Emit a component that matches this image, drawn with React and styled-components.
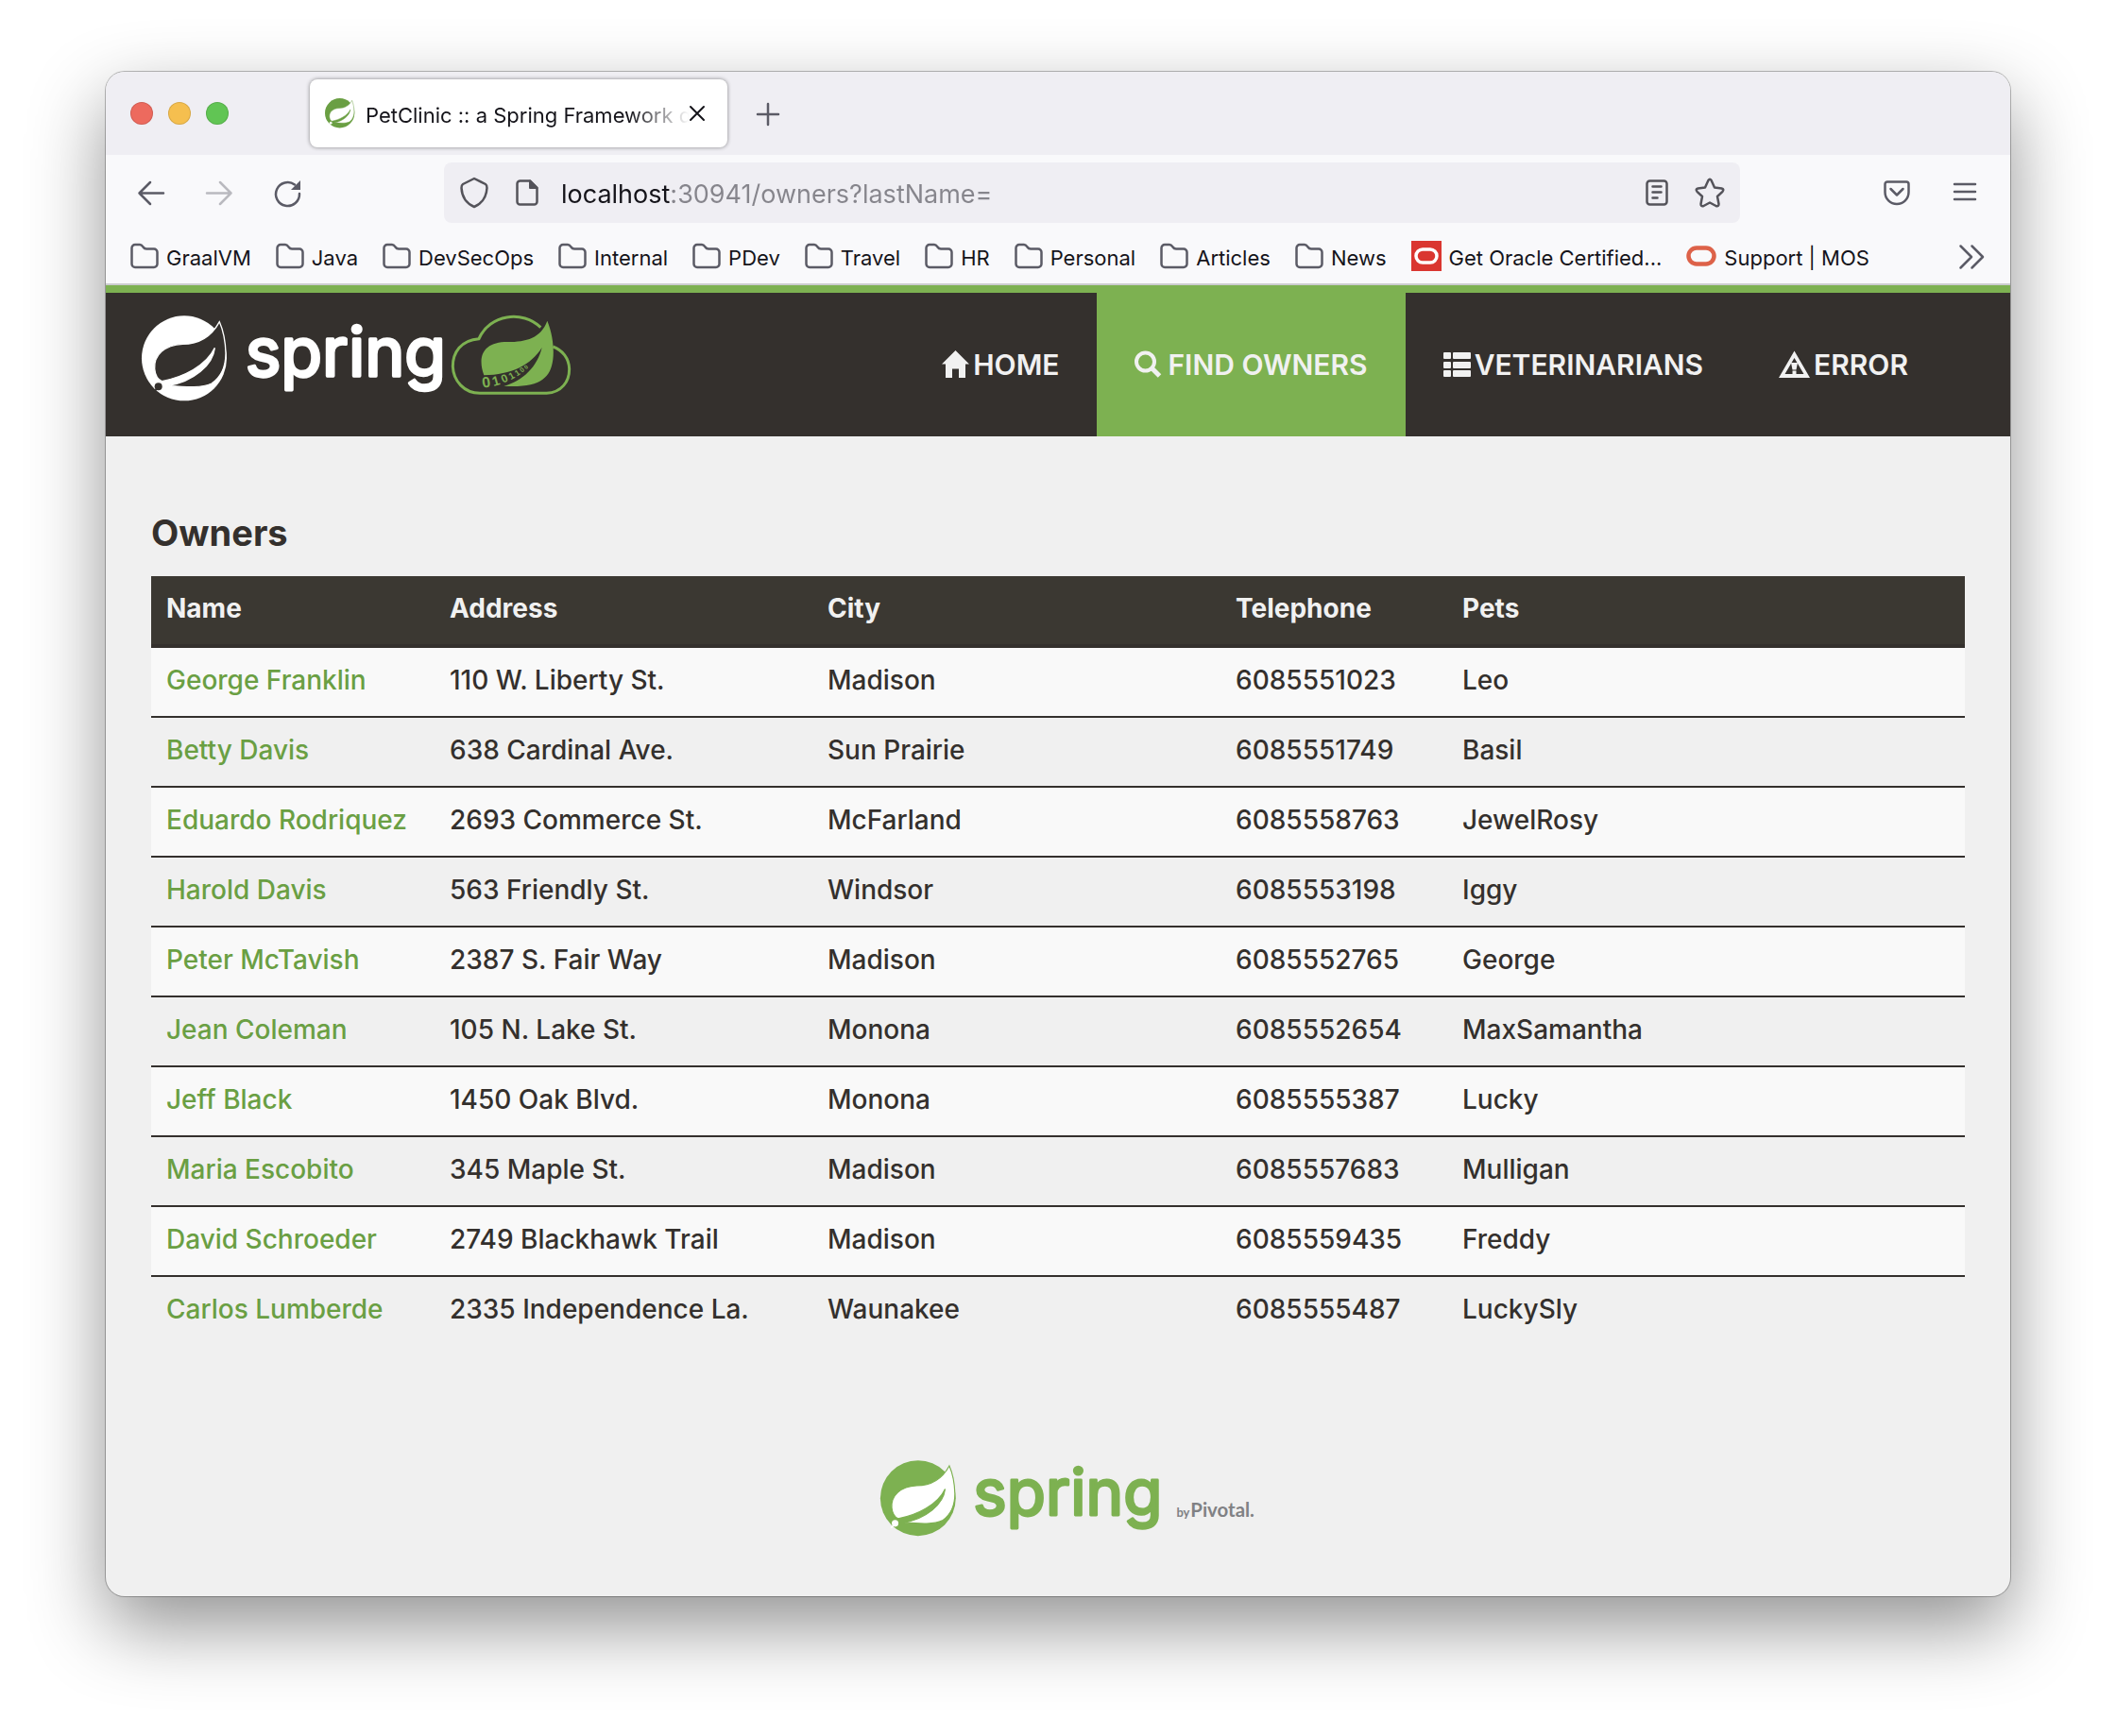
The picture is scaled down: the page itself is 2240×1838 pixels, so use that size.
import React from "react";
import styled, { createGlobalStyle, css } from "styled-components";

const sans = `Inter, "Liberation Sans", sans-serif`;
const green = "#7db151";
const dark = "#34302d";

const Global = createGlobalStyle`
  *, *::before, *::after { box-sizing: border-box; }
  body { margin: 0; background: #fff; font-family: ${sans}; color: ${dark}; }
  button { border: 0; padding: 0; background: none; font: inherit; color: inherit; }
  a { color: inherit; text-decoration: none; }
  svg { display: block; flex: none; overflow: visible; }
`;

const Desktop = styled.div`
  padding: 76px 112px 148px;
`;

const Window = styled.div`
  border-radius: 20px;
  overflow: hidden;
  background: #f0f0f0;
  box-shadow: 0 0 0 1px rgba(0, 0, 0, 0.26), 0 32px 80px rgba(0, 0, 0, 0.43);
`;

/* ---------- browser chrome ---------- */

const TabStrip = styled.div`
  display: flex;
  align-items: center;
  height: 88px;
  padding-left: 26px;
  background: #efeef3;
  color: #5b5b66;
`;

const Lights = styled.div`
  display: flex;
  gap: 16px;
  width: 190px;
`;

const Light = styled.button`
  width: 24px;
  height: 24px;
  border-radius: 50%;
  background: ${(p) => p.$color};
  box-shadow: inset 0 0 0 1px rgba(0, 0, 0, 0.12);
`;

const Tab = styled.div`
  display: flex;
  align-items: center;
  width: 442px;
  height: 72px;
  padding: 0 24px 0 16px;
  border-radius: 8px;
  background: #fff;
  color: #15141a;
  box-shadow: 0 0 4px rgba(0, 0, 0, 0.45);
`;

const TabTitle = styled.span`
  flex: 1;
  min-width: 0;
  margin-left: 11px;
  padding-top: 4px;
  overflow: hidden;
  white-space: nowrap;
  font-size: 22px;
  line-height: 32px;
  mask-image: linear-gradient(to left, transparent, #000 64px);
`;

const NewTab = styled.button`
  margin-left: 31px;
`;

const Toolbar = styled.div`
  display: flex;
  align-items: center;
  height: 80px;
  padding: 0 36px 0 34px;
  background: #f9f9fb;
  color: #5b5b66;
`;

const ToolGroup = styled.div`
  display: flex;
  align-items: center;
  gap: ${(p) => p.$gap};
`;

const IconButton = styled.button`
  opacity: ${(p) => (p.disabled ? 0.4 : 1)};
`;

const UrlBar = styled.div`
  display: flex;
  align-items: center;
  flex: 1;
  min-width: 0;
  height: 64px;
  margin: 0 152px;
  padding: 0 16px;
  border-radius: 8px;
  background: #efeef3;
  color: #54535a;
`;

const UrlInput = styled.input`
  flex: 1;
  min-width: 0;
  margin: 0 24px;
  padding: 3px 0 0;
  border: 0;
  outline: 0;
  font-family: Inter, "Liberation Sans", sans-serif;
  font-size: 27px;
  line-height: 40px;
  color: transparent;
  background: linear-gradient(to right, #15141a 115px, #86858c 115px);
  background-clip: text;
  -webkit-background-clip: text;
`;

const UrlActions = styled.div`
  display: flex;
  align-items: center;
  gap: 28px;
`;

const Bookmarks = styled.nav`
  display: flex;
  align-items: center;
  gap: 26px;
  height: 58px;
  padding: 0 28px 2px 26px;
  border-bottom: 2px solid #cccccf;
  background: #f9f9fb;
  color: #5b5b66;
`;

const Bookmark = styled.a`
  display: flex;
  align-items: center;
  gap: 8px;
  color: #15141a;
  font-size: 22px;
  line-height: 32px;
  white-space: nowrap;

  svg { color: #5b5b66; }
  span { padding-top: 4px; }
`;

const More = styled.button`
  margin-left: auto;
`;

/* ---------- page ---------- */

const Header = styled.header`
  display: flex;
  justify-content: space-between;
  border-top: 8px solid ${green};
  background: ${dark};
  padding: 0 68px 0 38px;
`;

const Brand = styled.a`
  padding-top: 24px;
`;

const Menu = styled.nav`
  display: flex;
`;

const MenuLink = styled.a`
  display: flex;
  align-items: center;
  gap: 4px;
  height: 152px;
  padding: 0 40px;
  font-size: 30px;
  font-weight: 600;
  line-height: 40px;
  color: #f1f1f1;
  ${(p) => p.$active && css`background: ${green};`}
`;

const Main = styled.main`
  padding: 82px 48px 122px;
`;

const Heading = styled.h2`
  margin: 0 0 26px;
  font-size: 38px;
  line-height: 40px;
  font-weight: 700;
`;

const Table = styled.table`
  width: 100%;
  table-layout: fixed;
  border-collapse: separate;
  border-spacing: 0;
  font-size: 28px;
  line-height: 40px;
`;

const Col = styled.col`
  width: ${(p) => p.$w};
`;

const Th = styled.th`
  padding: 14px 16px 18px;
  border-bottom: 4px solid ${dark};
  background: #3b3832;
  color: #f1f1f1;
  font-weight: 700;
  text-align: left;
`;

const Row = styled.tr`
  background: ${(p) => (p.$odd ? "#f9f9f9" : "transparent")};

  &:not(:first-child) td { border-top: 2px solid ${dark}; }
`;

const Td = styled.td`
  padding: 14px 16px 18px;
  font-weight: 500;
  white-space: nowrap;
`;

const OwnerLink = styled.a`
  color: #6a9f43;
`;

const Footer = styled.footer`
  display: flex;
  justify-content: center;
  padding-bottom: 60px;
`;

/* ---------- drawings ---------- */

const stroke = (w = 3) => ({
  fill: "none",
  stroke: "currentColor",
  strokeWidth: w,
  strokeLinecap: "round",
  strokeLinejoin: "round",
});

function LeafMark({ color, leaf }) {
  return (
    <g>
      <circle cx="135" cy="136" r="135" fill={color} />
      <path
        d="M247 20 C222 66 182 91 130 91 C72 94 38 126 41 170 C43 190 52 204 64 209 C132 196 205 160 232 103 C226 158 164 210 85 223 C148 228 192 230 222 216 C258 192 267 150 267 120 C266 85 258 45 247 20 Z"
        fill={leaf}
        stroke={color}
        strokeWidth="4"
      />
      <circle cx="53" cy="226" r="12" fill={leaf} />
      <path d="M52 230 L38 242" stroke={leaf} strokeWidth="5" />
    </g>
  );
}

function Wordmark({ color, x, y, size }) {
  return (
    <text
      x={x}
      y={y}
      fontFamily='Inter, "Liberation Sans", sans-serif'
      fontSize={size}
      fontWeight="400"
      fill={color}
      stroke={color}
      strokeWidth="10"
      strokeLinejoin="round"
    >
      spring
    </text>
  );
}

function HeaderLogo() {
  return (
    <svg width="456" height="92" viewBox="0 0 1368 276" role="img" aria-label="Spring">
      <LeafMark color="#fff" leaf={dark} />
      <Wordmark color="#fff" x="329" y="191" size="214" />
      <g transform="translate(984 0)">
        <path
          d="M283 38 C226 -18 120 -4 87 74 C30 78 4 118 4 162 C6 208 40 247 90 247 L302 247 C350 244 374 210 374 170 C373 136 352 110 322 99"
          fill="none"
          stroke={green}
          strokeWidth="9"
        />
        <path
          d="M304 17 C322 60 326 110 322 140 C314 200 280 230 166 224 C226 210 274 160 287 102 C252 158 190 188 103 190 C80 126 104 84 178 84 C238 84 284 72 304 17 Z"
          fill={green}
        />
        <path id="bits" d="M99 230 C170 224 240 186 290 112" fill="none" />
        <text fontFamily='"Liberation Sans", sans-serif' fontWeight="700" fill={green}>
          <textPath href="#bits">
            <tspan fontSize="48">0</tspan>
            <tspan dx="8" fontSize="42">1</tspan>
            <tspan dx="8" fontSize="36">0</tspan>
            <tspan dx="7" fontSize="30">1</tspan>
            <tspan dx="6" fontSize="26">1</tspan>
            <tspan dx="5" fontSize="22">0</tspan>
            <tspan dx="5" fontSize="18">0</tspan>
          </textPath>
        </text>
      </g>
    </svg>
  );
}

function FooterLogo() {
  return (
    <svg width="416" height="84" viewBox="-66 0 1404 284" role="img" aria-label="Spring by Pivotal">
      <LeafMark color={green} leaf="#fff" />
      <Wordmark color={green} x="333" y="197" size="227" />
      <text x="1060" y="203" fontFamily='Lato, "Liberation Sans", sans-serif' fill="#808184">
        <tspan fontSize="44" fontWeight="700">by</tspan>
        <tspan dx="3" fontSize="69" fontWeight="700">Pivotal.</tspan>
      </text>
    </svg>
  );
}

const TabLeaf = () => (
  <svg width="32" height="32" viewBox="0 0 276 276">
    <LeafMark color="#6a9f43" leaf="#fff" />
  </svg>
);

const Folder = () => (
  <svg width="30" height="28" viewBox="0 0 30 28" {...stroke(2.5)}>
    <path d="M5 2 H10 C12 2 12.500 3 13.500 4.500 C14.500 6 15 6.500 17 6.500 H25 A3.500 3.500 0 0 1 28.500 10 V22.500 A3.500 3.500 0 0 1 25 26 H5 A3.500 3.500 0 0 1 1.500 22.500 V5.500 A3.500 3.500 0 0 1 5 2 Z" />
  </svg>
);

const OracleSquare = () => (
  <svg width="32" height="32" viewBox="0 0 32 32">
    <rect width="32" height="32" fill="#da3630" />
    <rect x="5" y="9" width="22" height="14" rx="7" fill="none" stroke="#fff" strokeWidth="3.500" />
  </svg>
);

const OracleRing = () => (
  <svg width="32" height="24" viewBox="0 0 32 24">
    <rect x="2.500" y="3.500" width="27" height="17" rx="8.500" fill="none" stroke="#dd6249" strokeWidth="4.500" />
  </svg>
);

const HomeIcon = () => (
  <svg width="29" height="30" viewBox="0 0 29 30" fill="currentColor">
    <path d="M14.500 0 L29 14.500 H25 V29 H18 V19.500 H11 V29 H4 V14.500 H0 L14.500 0 Z" />
  </svg>
);

const SearchIcon = () => (
  <svg width="31" height="30" viewBox="0 0 31 30" fill="none" stroke="currentColor">
    <circle cx="11.500" cy="12" r="9.500" strokeWidth="4" />
    <path d="M18 18.500 L26.500 27" strokeWidth="5" />
  </svg>
);

const ListIcon = () => (
  <svg width="29" height="28" viewBox="0 0 29 28" fill="currentColor">
    {[0, 10, 19].map((y) => (
      <React.Fragment key={y}>
        <rect y={y + 1} width="8" height="7" rx="1" />
        <rect x="10" y={y + 1} width="19" height="7" rx="1" />
      </React.Fragment>
    ))}
  </svg>
);

const WarnIcon = () => (
  <svg width="33" height="30" viewBox="0 0 33 30" fill="currentColor">
    <path
      fillRule="evenodd"
      d="M16.500 0.500 L33 29 H0 Z M16.500 8 L6.500 25 H26.500 Z"
    />
    <path d="M13 13 H20 L18.500 20.500 H14.500 Z M14.500 21.500 h4 v3.500 h-4 Z" />
  </svg>
);

const Back = () => (
  <svg width="28" height="28" viewBox="0 0 28 28" {...stroke(2.5)}>
    <path d="M27 14.500 H1.500 M13 3 L1.500 14.500 L13 26" />
  </svg>
);

const Forward = () => (
  <svg width="28" height="28" viewBox="0 0 28 28" {...stroke(2.5)}>
    <path d="M1 14.500 H26.500 M15 3 L26.500 14.500 L15 26" />
  </svg>
);

const Reload = () => (
  <svg width="28" height="30" viewBox="0 0 28 30" {...stroke(2.5)}>
    <path d="M27 16 A12.500 12.500 0 1 1 22 6.500" />
    <path d="M28 2 V12 H18 Z" fill="currentColor" stroke="none" />
  </svg>
);

const Shield = () => (
  <svg width="32" height="34" viewBox="0 0 32 34" {...stroke(2.5)}>
    <path d="M16 2 L28 8 C29.500 9 29.500 10 29.500 12 C29 22 25 28 16 32 C7 28 3 22 2.500 12 C2.500 10 2.500 9 4 8 Z" />
  </svg>
);

const Doc = () => (
  <svg width="24" height="28" viewBox="0 0 24 28" {...stroke(2.5)}>
    <path d="M5 1.500 H15 L22.500 9 V23.500 A3 3 0 0 1 19.500 26.500 H4.500 A3 3 0 0 1 1.500 23.500 V4.500 A3 3 0 0 1 5 1.500 Z" />
    <path d="M15 1.500 V9 H22.500 Z" fill="currentColor" strokeWidth="2" />
  </svg>
);

const Reader = () => (
  <svg width="24" height="28" viewBox="0 0 24 28" {...stroke(2.5)}>
    <rect x="1.500" y="1.500" width="21" height="25" rx="3" />
    <path d="M7.500 7.500 H16.500 M7.500 13.500 H16.500 M7.500 19.500 H12.500" />
  </svg>
);

const Star = () => (
  <svg width="32" height="32" viewBox="0 0 32 32" {...stroke(2.5)}>
    <path d="M14.400 3 Q16 0.500 17.600 3 L21 10.500 L28.500 11.500 Q31.500 12.300 29.500 14.800 L24 20 L25.500 28 Q25.500 31 22.500 30 L16 26.500 L9.500 30 Q6.500 31 6.500 28 L8 20 L2.500 14.800 Q0.500 12.300 3.500 11.500 L11 10.500 Z" />
  </svg>
);

const Pocket = () => (
  <svg width="28" height="28" viewBox="0 0 28 28" {...stroke(2.5)}>
    <path d="M4 2.500 H24 A2.500 2.500 0 0 1 26.500 5 V13.500 A12.500 12.500 0 0 1 1.500 13.500 V5 A2.500 2.500 0 0 1 4 2.500 Z M7.500 10 L14 16.500 L20.500 10" />
  </svg>
);

const Burger = () => (
  <svg width="24" height="24" viewBox="0 0 24 24" {...stroke(2.5)}>
    <path d="M1 3 H23 M1 11 H23 M1 19 H23" />
  </svg>
);

const Chevrons = () => (
  <svg width="26" height="26" viewBox="0 0 26 26" {...stroke(2.5)}>
    <path d="M1.500 2.500 L13 14 L1.500 25.500 M13.500 2.500 L25 14 L13.500 25.500" />
  </svg>
);

const Cross = () => (
  <svg width="16" height="16" viewBox="0 0 16 16" {...stroke(2)}>
    <path d="M1 1 L15 15 M15 1 L1 15" />
  </svg>
);

const Plus = () => (
  <svg width="24" height="24" viewBox="0 0 24 24" {...stroke(2.5)}>
    <path d="M12 2 V24 M1 13 H23" />
  </svg>
);

/* ---------- data ---------- */

const bookmarks = [
  ["GraalVM", Folder],
  ["Java", Folder],
  ["DevSecOps", Folder],
  ["Internal", Folder],
  ["PDev", Folder],
  ["Travel", Folder],
  ["HR", Folder],
  ["Personal", Folder],
  ["Articles", Folder],
  ["News", Folder],
  ["Get Oracle Certified...", OracleSquare],
  ["Support | MOS", OracleRing],
];

const menu = [
  ["HOME", HomeIcon],
  ["FIND OWNERS", SearchIcon],
  ["VETERINARIANS", ListIcon],
  ["ERROR", WarnIcon],
];

const columns = [
  ["Name", "300px"],
  ["Address", "400px"],
  ["City", "432px"],
  ["Telephone", "240px"],
  ["Pets", "auto"],
];

const owners = [
  ["George Franklin", "110 W. Liberty St.", "Madison", "6085551023", "Leo"],
  ["Betty Davis", "638 Cardinal Ave.", "Sun Prairie", "6085551749", "Basil"],
  ["Eduardo Rodriquez", "2693 Commerce St.", "McFarland", "6085558763", "JewelRosy"],
  ["Harold Davis", "563 Friendly St.", "Windsor", "6085553198", "Iggy"],
  ["Peter McTavish", "2387 S. Fair Way", "Madison", "6085552765", "George"],
  ["Jean Coleman", "105 N. Lake St.", "Monona", "6085552654", "MaxSamantha"],
  ["Jeff Black", "1450 Oak Blvd.", "Monona", "6085555387", "Lucky"],
  ["Maria Escobito", "345 Maple St.", "Madison", "6085557683", "Mulligan"],
  ["David Schroeder", "2749 Blackhawk Trail", "Madison", "6085559435", "Freddy"],
  ["Carlos Lumberde", "2335 Independence La.", "Waunakee", "6085555487", "LuckySly"],
];

export default function App() {
  return (
    <Desktop>
      <Global />
      <Window>
        <TabStrip>
          <Lights>
            <Light $color="#ed6a5e" aria-label="Close window" />
            <Light $color="#f5bf4f" aria-label="Minimize window" />
            <Light $color="#61c554" aria-label="Zoom window" />
          </Lights>
          <Tab>
            <TabLeaf />
            <TabTitle>PetClinic :: a Spring Framework demonstration</TabTitle>
            <button aria-label="Close tab"><Cross /></button>
          </Tab>
          <NewTab aria-label="New tab"><Plus /></NewTab>
        </TabStrip>

        <Toolbar>
          <ToolGroup $gap="44px">
            <IconButton aria-label="Back"><Back /></IconButton>
            <IconButton aria-label="Forward" disabled><Forward /></IconButton>
            <IconButton aria-label="Reload"><Reload /></IconButton>
          </ToolGroup>
          <UrlBar>
            <UrlActions>
              <Shield />
              <Doc />
            </UrlActions>
            <UrlInput aria-label="Address" defaultValue="localhost:30941/owners?lastName=" />
            <UrlActions>
              <IconButton aria-label="Reader view"><Reader /></IconButton>
              <IconButton aria-label="Bookmark this page"><Star /></IconButton>
            </UrlActions>
          </UrlBar>
          <ToolGroup $gap="46px">
            <IconButton aria-label="Save to Pocket"><Pocket /></IconButton>
            <IconButton aria-label="Application menu"><Burger /></IconButton>
          </ToolGroup>
        </Toolbar>

        <Bookmarks aria-label="Bookmarks">
          {bookmarks.map(([label, Icon]) => (
            <Bookmark key={label} href="#">
              <Icon />
              <span>{label}</span>
            </Bookmark>
          ))}
          <More aria-label="More bookmarks"><Chevrons /></More>
        </Bookmarks>

        <Header>
          <Brand href="#"><HeaderLogo /></Brand>
          <Menu>
            {menu.map(([label, Icon]) => (
              <MenuLink key={label} href="#" $active={label === "FIND OWNERS"}>
                <Icon />
                {label}
              </MenuLink>
            ))}
          </Menu>
        </Header>

        <Main>
          <Heading>Owners</Heading>
          <Table>
            <colgroup>
              {columns.map(([name, w]) => <Col key={name} $w={w} />)}
            </colgroup>
            <thead>
              <tr>
                {columns.map(([name]) => <Th key={name} scope="col">{name}</Th>)}
              </tr>
            </thead>
            <tbody>
              {owners.map(([name, ...rest], i) => (
                <Row key={name} $odd={i % 2 === 0}>
                  <Td><OwnerLink href="#">{name}</OwnerLink></Td>
                  {rest.map((value) => <Td key={value}>{value}</Td>)}
                </Row>
              ))}
            </tbody>
          </Table>
        </Main>

        <Footer><FooterLogo /></Footer>
      </Window>
    </Desktop>
  );
}
